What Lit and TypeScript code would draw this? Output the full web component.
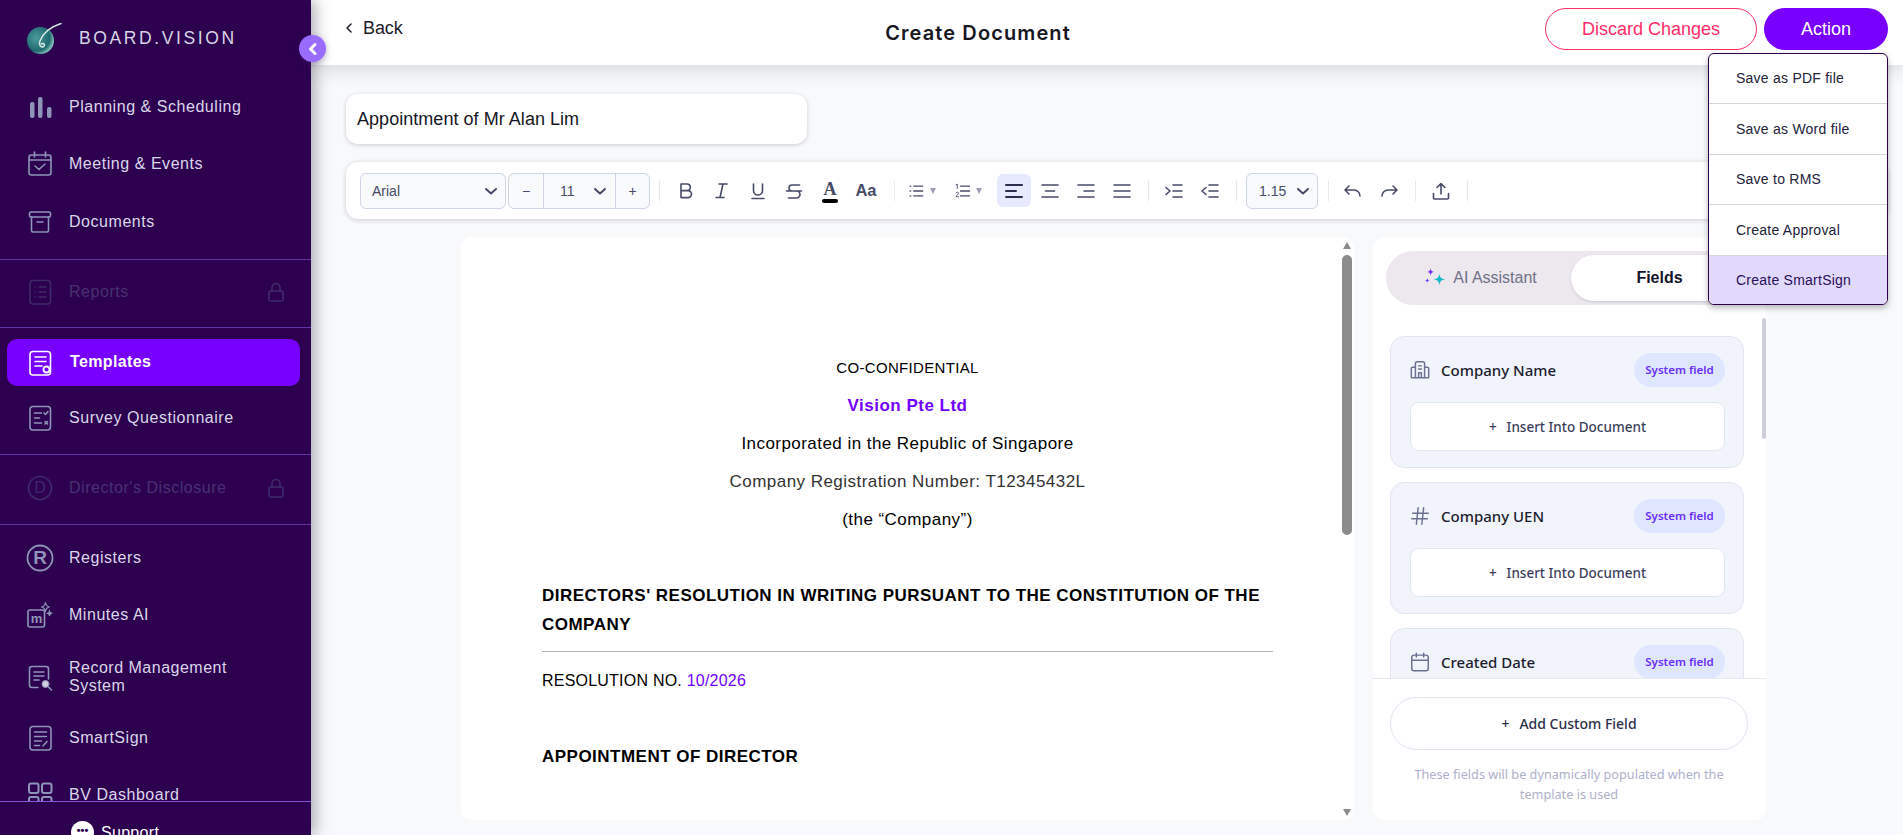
import { LitElement, html, svg, css } from "lit";
import { customElement } from "lit/decorators.js";

const ico = (body: unknown, size = 28, vb = 28) =>
  html`<svg width=${size} height=${size} viewBox="0 0 ${vb} ${vb}" fill="none" stroke="currentColor" stroke-width="1.6" stroke-linecap="round" stroke-linejoin="round">${body}</svg>`;
const I = {
  bars: svg`<rect x="4" y="9" width="4.5" height="16" rx="2" fill="currentColor" stroke="none"/><rect x="12" y="4" width="4.5" height="21" rx="2" fill="currentColor" stroke="none"/><rect x="21" y="14" width="4.5" height="11" rx="2" fill="currentColor" stroke="none"/>`,
  cal: svg`<rect x="3" y="5" width="22" height="20" rx="2.5"/><path d="M3 10h22M8.5 2v5M19.5 2v5M9 16l4 3.5 6-5.5"/>`,
  box: svg`<rect x="3.5" y="4" width="21" height="5" rx="1.5"/><path d="M5.5 9v13.5a1.500 1.500 0 0 0 1.500 1.500h14a1.500 1.500 0 0 0 1.500-1.500V9M11 14h6"/>`,
  list: svg`<rect x="4" y="2.500" width="20.500" height="23.500" rx="3"/><path d="M9 9h.3M13 9h7M9 14h.3M13 14h7M9 19h.3M13 19h7"/>`,
  lock: svg`<rect x="5" y="11" width="14" height="10" rx="2"/><path d="M8 11V7.500a4 4 0 0 1 8 0V11"/>`,
  tpl: svg`<rect x="4" y="2.500" width="20.500" height="23.500" rx="3"/><path d="M9 8h11M9 12.500h11M9 17h7"/><circle cx="20.500" cy="20.500" r="3" fill="#7700ff" stroke-width="1.8"/>`,
  survey: svg`<rect x="4" y="2.500" width="20.500" height="23.500" rx="3"/><path d="M8.500 9h7M8.500 14h5M8.500 19h7M18 9l1.500 1.500 2.500-3M19 17.500l2.500 2.500M21.500 17.500 19 20"/>`,
  dcirc: svg`<circle cx="14" cy="14" r="11.500"/>`,
  rcirc: svg`<circle cx="14" cy="14" r="12.500" stroke-width="1.8"/>`,
  minutes: svg`<rect x="2" y="9" width="16.500" height="17" rx="2"/><path d="M19.500 1.500c.5 3 1.500 4 4 4.500-2.500.5-3.500 1.500-4 4.500-.5-3-1.500-4-4-4.500 2.500-.5 3.500-1.500 4-4.500z" stroke-width="1.200"/><path d="M23.500 9.500c.3 1.800 1 2.400 2.800 2.800-1.800.4-2.500 1-2.800 2.800-.3-1.800-1-2.400-2.800-2.800 1.800-.4 2.500-1 2.800-2.800z" fill="currentColor" stroke-width="1"/>`,
  rms: svg`<path d="M12 24.500H6a2.500 2.500 0 0 1-2.500-2.500V6A2.500 2.500 0 0 1 6 3.500h14A2.500 2.500 0 0 1 22.500 6v10"/><path d="M8 9h10M8 13h10M8 17h5"/><circle cx="19.500" cy="21" r="3.500" fill="#cfcfe0" stroke-width="1"/><path d="M22.500 24l3 3"/>`,
  sign: svg`<rect x="4" y="2.500" width="21" height="23.500" rx="3"/><path d="M8.500 8h12M8.500 12.500h12M8.500 17h7M8.500 21.500h5M17 22l4-4.500"/>`,
  dash: svg`<rect x="3" y="2.500" width="9.500" height="9.500" rx="2" stroke-width="2"/><rect x="16" y="2.500" width="9.500" height="9.500" rx="2" stroke-width="2"/><rect x="3" y="16" width="9.500" height="9.500" rx="2" stroke-width="2"/><rect x="16" y="16" width="9.500" height="9.500" rx="2" stroke-width="2"/>`,
  chev: svg`<path d="M4 7l5 4.500L14 7" stroke-width="2"/>`,
  bold: svg`<path d="M6 4h6a3.300 3.300 0 0 1 0 6.600H6zM6 10.600h7a3.500 3.500 0 0 1 0 7H6z"/>`,
  italic: svg`<path d="M8 4h8M5 17.500h8M12 4 9 17.500" />`,
  under: svg`<path d="M6.500 4v6.500a4.500 4.500 0 0 0 9 0V4M5 18.500h12"/>`,
  strike: svg`<path d="M16.500 5H9a3 3 0 0 0 0 6h4.500a3.500 3.500 0 0 1 0 7H5.500M3.500 11h15"/>`,
  alignL: svg`<path d="M3 5h16M3 11h10M3 17h16" stroke-width="2"/>`,
  alignC: svg`<path d="M3 5h16M6.500 11h9M3 17h16"/>`,
  alignR: svg`<path d="M3 5h16M9 11h10M3 17h16"/>`,
  alignJ: svg`<path d="M3 5h16M3 11h16M3 17h16"/>`,
  bullet: svg`<path d="M7 5h11M7 11h11M7 17h11M2.500 5h.8M2.500 11h.8M2.500 17h.8"/>`,
  number: svg`<path d="M8 5h11M8 11h11M8 17h11"/><path d="M2.500 3.500 4 2.500V8M2.500 13.500c.5-1.500 3-1.500 3 0 0 1.500-3 3-3 4.500h3" stroke-width="1.100"/>`,
  indent: svg`<path d="M10 5h9M10 11h9M10 17h9M3 7.500 7 11l-4 3.500"/>`,
  outdent: svg`<path d="M10 5h9M10 11h9M10 17h9M7 7.500 3 11l4 3.500"/>`,
  undo: svg`<path d="M7 6 3 10l4 4M3 10h9a6 6 0 0 1 6 6"/>`,
  redo: svg`<path d="M15 6l4 4-4 4M19 10h-9a6 6 0 0 0-6 6"/>`,
  upload: svg`<path d="M11 14V4M7 7.500 11 3.500l4 4M3.500 13.500v4.500a1 1 0 0 0 1 1h13a1 1 0 0 0 1-1v-4.500"/>`,
  building: svg`<path d="M7 20V5a2 2 0 0 1 2-2h6a2 2 0 0 1 2 2v15M7 9H4a1.500 1.500 0 0 0-1.500 1.500V20M17 9h3a1.500 1.500 0 0 1 1.500 1.500V20M2.500 20.500h19M10.500 7.500h3M10.500 11h3M10.500 20v-5h3v5"/>`,
  hash: svg`<path d="M4 9h17M3 15h17M10 3 8 21M16 3l-2 18"/>`,
  date: svg`<rect x="3" y="4.500" width="18" height="17" rx="2.500"/><path d="M3 10h18M8 2.500v4M16 2.500v4"/>`,
};

const stars = html`<svg width="22" height="22" viewBox="0 0 20 20"><path d="M6 1c.3 2.500 1 3.200 3.200 3.500C7 4.800 6.300 5.500 6 8c-.3-2.500-1-3.200-3.200-3.500C5 4.200 5.700 3.500 6 1z" fill="#7a2cff"/><path d="M14 6c.5 3.800 1.500 4.800 5.200 5.300-3.700.5-4.700 1.500-5.200 5.300-.5-3.800-1.500-4.800-5.200-5.300 3.700-.5 4.700-1.500 5.200-5.300z" fill="#12b8c8"/><path d="M3 10c.2 1.500.7 2 2.200 2.200-1.500.2-2 .7-2.200 2.200-.2-1.500-.7-2-2.200-2.200 1.500-.2 2-.7 2.200-2.200z" fill="#6a3cf0"/></svg>`;

const logo = html`<svg width="36" height="32" viewBox="0 0 36 32">
  <defs><radialGradient id="lg" cx="35%" cy="40%" r="70%"><stop offset="0" stop-color="#4d9a9c"/><stop offset=".7" stop-color="#1f6a70"/><stop offset="1" stop-color="#9fd8cc"/></radialGradient></defs>
  <circle cx="14.500" cy="17.500" r="13.500" fill="url(#lg)"/>
  <path d="M35 .5C24 4 17 10 14 18c-1.500 4 1 7 3.500 5.500 2-1.300.5-4-2-2.500" fill="none" stroke="#d8e8e4" stroke-width="1.500" stroke-linecap="round"/>
</svg>`;

type Row = { t: string; i: unknown; locked?: boolean; letter?: string };

@customElement("app-root")
export class AppRoot extends LitElement {
  static styles = css`
    :host { display: block; height: 835px; overflow: hidden; font-family: "Liberation Sans", Arial, sans-serif; background: #f8f9fb; }
    * { box-sizing: border-box; }
    .app { display: grid; grid-template-columns: 311px 1fr; height: 835px; }
    /* sidebar */
    .side { position: relative; z-index: 3; background: #2c004f; color: #dbd6ea; display: flex; flex-direction: column; height: 835px; box-shadow: 4px 0 14px rgba(40,40,50,.38); }
    .brand { height: 78px; display: flex; align-items: flex-start; padding: 23px 0 0 26px; flex: none; }
    .brand span { margin: 5px 0 0 17px; font-size: 17.500px; letter-spacing: 2.600px; color: #d9d4e6; line-height: 20px; }
    .toggle { position: absolute; right: -15px; top: 35px; width: 27px; height: 27px; border-radius: 50%; background: #9a6bff; color: #fff; display: flex; align-items: center; justify-content: center; box-shadow: 0 2px 6px rgba(60,40,120,.35); }
    .nav { flex: 1; min-height: 0; overflow: hidden; }
    .sec { border-bottom: 1px solid #5d35a6; }
    .sec.last { border-bottom: 0; }
    .s1 { padding-bottom: 8px; }
    .s2 { padding: 4px 0 6px; }
    .s3 { padding: 11px 0 7px; }
    .s4 { padding: 5px 0 7px; }
    .s5 { padding-top: 4px; }
    .row { height: 57.5px; display: flex; align-items: center; padding-left: 26px; font-size: 16px; letter-spacing: .54px; line-height: 18px; color: #dbd6ea; }
    .row .ic { width: 28px; height: 28px; flex: none; color: #8f93b8; margin-right: 15px; }
    .row .ic svg { display: block; }
    .row.tall { height: 65px; }
    .row.locked { color: #47326f; }
    .row.locked .ic { color: #3f2a68; position: relative; }
    .lk { margin-left: auto; margin-right: 23px; width: 24px; height: 24px; color: #3f2a68; }
    .row .wrap { width: 180px; letter-spacing: .5px; }
    .row.active { height: 47px; margin: 0 11px 3px 7px; padding: 0 0 2px 19px; background: #7700ff; border-radius: 10px; color: #fff; font-weight: 700; letter-spacing: .38px; }
    .row.active .ic { color: #fff; margin-right: 16px; margin-top: 2px; }
    .gl { position: absolute; inset: 0; display: flex; align-items: center; justify-content: center; font-size: 16px; font-weight: 400; letter-spacing: 0; color: inherit; }
    .gl.b { font-weight: 700; font-size: 19px; }
    .gl.m { inset: 9px 9px 2px 2px; font-size: 13px; font-weight: 700; }
    .ic.rel { position: relative; }
    .foot { flex: none; height: 34px; border-top: 1px solid #8453d8; display: flex; align-items: flex-start; padding: 19px 0 0 71px; gap: 7px; color: #fff; font-size: 16px; letter-spacing: .3px; line-height: 24px; }
    .dots { width: 23px; height: 23px; border-radius: 50%; background: #fff; color: #2c004f; flex: none; font-size: 11px; font-weight: 700; letter-spacing: 0; line-height: 18px; text-align: center; }
    /* main */
    .main { min-width: 0; display: flex; flex-direction: column; height: 835px; }
    .top { position: relative; z-index: 2; flex: none; height: 65px; background: #fff; display: flex; align-items: flex-start; box-shadow: 0 4px 18px rgba(60,60,70,.18); padding: 8px 15px 0 34px; }
    .back { display: flex; align-items: center; gap: 10px; width: 481px; height: 40px; font-size: 18px; letter-spacing: -.1px; color: #1b1b2a; flex: none; }
    .title { width: 304px; flex: none; margin: 6px auto 0 0; text-align: center; font-family: Inter, sans-serif; font-weight: 600; font-size: 20px; letter-spacing: 1.1px; line-height: 38px; color: #16161f; white-space: nowrap; }
    .btn { height: 42px; border-radius: 21px; display: flex; align-items: center; justify-content: center; font-size: 18px; flex: none; }
    .discard { width: 212px; border: 1px solid #ff2d68; color: #ff2d68; background: #fff; margin-right: 7px; }
    .action { width: 124px; background: #7700ff; color: #fff; }
    .menu { position: absolute; top: 53px; right: 15px; width: 180px; height: 252px; background: #fff; border: 1px solid #2c004f; border-radius: 6px; overflow: hidden; box-shadow: 0 3px 6px rgba(0,0,0,.28); z-index: 5; display: flex; flex-direction: column; }
    .menu div { height: 50px; flex: none; display: flex; align-items: center; padding: 0 0 2px 27px; font-size: 14px; letter-spacing: .24px; color: #22223a; border-bottom: 1px solid #d4d4dc; }
    .menu div:nth-child(even) { height: 51px; padding-bottom: 0; }
    .menu div:last-child { height: 50px; border-bottom: 0; background: #e0d9fd; color: #2c0f5e; }
    .body { flex: 1; min-height: 0; padding: 29px 15px 15px 35px; display: flex; flex-direction: column; position: relative; }
    .name { width: 461px; height: 50px; background: #fff; border-radius: 12px; box-shadow: 0 1px 4px rgba(30,30,60,.2); padding-left: 11px; font-size: 18px; letter-spacing: .04px; display: flex; align-items: center; color: #16161f; flex: none; }
    .bar { height: 57px; margin-top: 18px; background: #fff; border-radius: 12px; box-shadow: 0 1px 5px rgba(30,30,60,.2); display: flex; align-items: center; padding-left: 14px; flex: none; color: #474b68; }
    .sel { height: 36px; border: 1px solid #cdd5e6; background: #f8fafc; border-radius: 6px; display: flex; align-items: center; font-size: 14px; color: #474b68; padding: 0 5px 0 11px; justify-content: space-between; flex: none; }
    .sel.font { width: 146px; margin-right: 2px; }
    .sel.lh { width: 72px; padding: 0 5px 0 12px; }
    .group { display: flex; width: 142px; height: 36px; border: 1px solid #cdd5e6; border-radius: 6px; background: #f8fafc; font-size: 14px; align-items: center; flex: none; }
    .group span { display: flex; align-items: center; justify-content: center; height: 100%; }
    .g1 { width: 35px; border-right: 1px solid #cdd5e6; }
    .g2 { width: 72px; border-right: 1px solid #cdd5e6; padding: 0 6px 0 16px; justify-content: space-between !important; }
    .g3 { flex: 1; }
    .sep { width: 1px; height: 20px; background: #e6e8ef; flex: none; margin: 0 9px 0 9px; }
    .sep.l { margin: 0 10px 0 9px; }
    .sep.t { margin: 0 8px 0 7px; }
    .sep.p { margin: 0 9px 0 7px; }
    .sep.a { margin: 0 7px 0 10px; }
    .tb { width: 34px; height: 33px; margin-right: 2px; display: flex; align-items: center; justify-content: center; border-radius: 6px; flex: none; }
    .tb.on { background: #e7e9fd; color: #2b2d4c; }
    .tb.wide { width: 43px; margin-right: 3px; gap: 3px; justify-content: flex-start; padding-left: 3px; }
    .caret { width: 0; height: 0; border-left: 3.500px solid transparent; border-right: 3.500px solid transparent; border-top: 6px solid #9a9db3; flex: none; margin-left: 1px; }
    .color { display: flex; flex-direction: column; align-items: center; font-family: "Liberation Serif", serif; font-weight: 700; font-size: 18px; line-height: 17px; color: #474b68; margin-top: 2px; }
    .color i { display: block; width: 16px; height: 4px; border-radius: 2px; background: #000; margin-top: 1px; }
    .aa { font-weight: 700; font-size: 16.500px; color: #474b68; }
    .row2 { flex: 1; min-height: 0; margin: 18px 0 0 115px; display: flex; gap: 19px; height: 583px; }
    .paper { width: 893px; background: #fff; border-radius: 10px; display: flex; overflow: hidden; flex: none; }
    .doc { flex: 1; min-width: 0; padding: 118px 69px 0 81px; color: #000; font-size: 17px; letter-spacing: .45px; }
    .doc p { margin: 0 0 12px; height: 26px; line-height: 26px; text-align: center; }
    .doc .c { font-size: 15px; letter-spacing: .32px; }
    .doc .v { color: #7000ff; font-weight: 700; font-size: 17px; letter-spacing: .5px; }
    .doc .gr { color: #333; letter-spacing: .46px; }
    .doc h3 { margin: 48px 0 0; font-size: 17px; line-height: 29px; letter-spacing: .48px; font-weight: 700; color: #000; }
    .doc hr { margin: 12px 0 0; border: 0; border-top: 1px solid #b4b4b8; }
    .doc .res { margin: 16px 0 0; height: 26px; line-height: 26px; text-align: left; font-size: 16px; letter-spacing: .22px; }
    .doc .res b { font-weight: 400; color: #7000ff; }
    .doc h3.ap { margin-top: 48px; }
    .track { width: 10px; margin-right: 2px; flex: none; display: flex; flex-direction: column; align-items: center; padding: 5px 0 4px; }
    .up { border-left: 4.500px solid transparent; border-right: 4.500px solid transparent; border-bottom: 7px solid #8c8c8c; }
    .dn { border-left: 4.500px solid transparent; border-right: 4.500px solid transparent; border-top: 7px solid #8c8c8c; margin-top: auto; }
    .thumb { width: 10px; height: 280px; margin-top: 6px; background: #8c8c8c; border-radius: 5px; }
    .panel { width: 393px; background: #fff; border-radius: 12px; display: flex; flex-direction: column; overflow: hidden; position: relative; flex: none; }
    .tabs { flex: none; margin: 14px 14px 0 13px; height: 54px; border-radius: 27px; background: #ece8ee; padding: 4px; display: flex; font-size: 16px; }
    .tabs div { display: flex; align-items: center; justify-content: center; gap: 7px; border-radius: 23px; color: #6f7186; width: 181px; flex: none; }
    .tabs .cur { background: #fff; color: #14142a; font-weight: 700; box-shadow: 0 1px 3px rgba(30,30,60,.15); width: 177px; }
    .list { flex: 1; min-height: 0; overflow: hidden; padding: 31px 22px 0 17px; position: relative; border-bottom: 1px solid #e6e8f2; display: flex; flex-direction: column; gap: 14px; }
    .sb { position: absolute; right: 0; top: 13px; width: 4px; height: 121px; background: #cdced8; border-radius: 2px; }
    .card { flex: none; height: 132px; border: 1px solid #e2e6f1; background: #f1f4fa; border-radius: 14px; padding: 16px 18px 0 19px; font-family: "Noto Sans", sans-serif; }
    .chd { display: flex; align-items: center; height: 34px; color: #1c1c30; font-size: 15px; font-weight: 500; }
    .chd svg { color: #6b7190; margin: 0 10px 0 -1px; flex: none; }
    .tag { margin-left: auto; width: 91px; height: 34px; border-radius: 17px; background: #dee7ff; color: #6a2cff; font-size: 11.500px; font-weight: 600; display: flex; align-items: center; justify-content: center; padding-bottom: 1px; }
    .ins { margin-top: 15px; height: 49px; border: 1px solid #e2e6f1; background: #fff; border-radius: 9px; display: flex; align-items: center; justify-content: center; gap: 10px; font-size: 13.500px; color: #3c3f5c; font-weight: 500; }
    .pf { flex: none; height: 141px; padding: 18px 18px 0 17px; font-family: "Noto Sans", sans-serif; text-align: center; }
    .add { height: 53px; width: 358px; border: 1px solid #e2e4f2; border-radius: 27px; display: flex; align-items: center; justify-content: center; gap: 10px; font-size: 14px; font-weight: 500; color: #2c2f4c; padding-bottom: 1px; }
    .note { margin: 14px 0 0; width: 358px; padding: 0 14px; font-size: 12.700px; line-height: 20px; color: #aeb0cc; }
  `;

  private row(r: Row) {
    return html`<div class="row ${r.locked ? "locked" : ""}">
      <div class="ic rel">${ico(r.i)}${r.letter ? html`<span class="gl ${r.letter === "R" ? "b" : ""}">${r.letter}</span>` : ""}</div>
      <span>${r.t}</span>
      ${r.locked ? html`<div class="lk">${ico(I.lock, 24, 24)}</div>` : ""}
    </div>`;
  }

  private tb(i: unknown, cls = "") {
    return html`<div class="tb ${cls}">${ico(i, 22, 22)}</div>`;
  }

  render() {
    const cards = [
      { t: "Company Name", i: I.building },
      { t: "Company UEN", i: I.hash },
      { t: "Created Date", i: I.date },
    ];
    const chev = ico(I.chev, 18, 18);
    return html`<div class="app">
      <aside class="side">
        <div class="brand">${logo}<span>BOARD.VISION</span></div>
        <div class="toggle"><svg width="14" height="14" viewBox="0 0 14 14" fill="none" stroke="currentColor" stroke-width="3" stroke-linecap="round" stroke-linejoin="round"><path d="M9 2.500 4.500 7 9 11.500"/></svg></div>
        <nav class="nav">
          <div class="sec s1">
            ${this.row({ t: "Planning & Scheduling", i: I.bars })}
            ${this.row({ t: "Meeting & Events", i: I.cal })}
            ${this.row({ t: "Documents", i: I.box })}
          </div>
          <div class="sec s2">${this.row({ t: "Reports", i: I.list, locked: true })}</div>
          <div class="sec s3">
            <div class="row active"><div class="ic">${ico(I.tpl)}</div><span>Templates</span></div>
            ${this.row({ t: "Survey Questionnaire", i: I.survey })}
          </div>
          <div class="sec s4">${this.row({ t: "Director's Disclosure", i: I.dcirc, locked: true, letter: "D" })}</div>
          <div class="sec s5 last">
            ${this.row({ t: "Registers", i: I.rcirc, letter: "R" })}
            <div class="row"><div class="ic rel">${ico(I.minutes)}<span class="gl m">m</span></div><span>Minutes AI</span></div>
            <div class="row tall"><div class="ic">${ico(I.rms)}</div><span class="wrap">Record Management System</span></div>
            ${this.row({ t: "SmartSign", i: I.sign })}
            ${this.row({ t: "BV Dashboard", i: I.dash })}
          </div>
        </nav>
        <div class="foot"><div class="dots">•••</div><span>Support</span></div>
      </aside>
      <main class="main">
        <header class="top">
          <div class="back"><svg width="8" height="12" viewBox="0 0 8 12" fill="none" stroke="#1b1b2a" stroke-width="1.500" stroke-linecap="round" stroke-linejoin="round"><path d="M6 2 2 6l4 4"/></svg><span>Back</span></div>
          <div class="title">Create Document</div>
          <div class="btn discard">Discard Changes</div>
          <div class="btn action">Action</div>
          <div class="menu">
            <div>Save as PDF file</div><div>Save as Word file</div><div>Save to RMS</div><div>Create Approval</div><div>Create SmartSign</div>
          </div>
        </header>
        <section class="body">
          <div class="name">Appointment of Mr Alan Lim</div>
          <div class="bar">
            <div class="sel font"><span>Arial</span>${chev}</div>
            <div class="group"><span class="g1">−</span><span class="g2">11 ${chev}</span><span class="g3">+</span></div>
            <div class="sep"></div>
            ${this.tb(I.bold)}${this.tb(I.italic)}${this.tb(I.under)}${this.tb(I.strike)}
            <div class="tb"><div class="color">A<i></i></div></div>
            <div class="tb aa">Aa</div>
            <div class="sep l"></div>
            <div class="tb wide">${ico(I.bullet, 18, 22)}<span class="caret"></span></div>
            <div class="tb wide">${ico(I.number, 18, 22)}<span class="caret"></span></div>
            ${this.tb(I.alignL, "on")}${this.tb(I.alignC)}${this.tb(I.alignR)}${this.tb(I.alignJ)}
            <div class="sep t"></div>
            ${this.tb(I.indent)}${this.tb(I.outdent)}
            <div class="sep p"></div>
            <div class="sel lh"><span>1.15</span>${chev}</div>
            <div class="sep a"></div>
            ${this.tb(I.undo)}${this.tb(I.redo)}
            <div class="sep t"></div>
            ${this.tb(I.upload)}
            <div class="sep t"></div>
          </div>
          <div class="row2">
            <article class="paper">
              <div class="doc">
                <p class="c">CO-CONFIDENTIAL</p>
                <p class="v">Vision Pte Ltd</p>
                <p>Incorporated in the Republic of Singapore</p>
                <p class="gr">Company Registration Number: T12345432L</p>
                <p>(the “Company”)</p>
                <h3>DIRECTORS' RESOLUTION IN WRITING PURSUANT TO THE CONSTITUTION OF THE COMPANY</h3>
                <hr />
                <p class="res">RESOLUTION NO. <b>10/2026</b></p>
                <h3 class="ap">APPOINTMENT OF DIRECTOR</h3>
              </div>
              <div class="track"><div class="up"></div><div class="thumb"></div><div class="dn"></div></div>
            </article>
            <aside class="panel">
              <div class="tabs"><div>${stars}<span>AI Assistant</span></div><div class="cur">Fields</div></div>
              <div class="list">
                <div class="sb"></div>
                ${cards.map((c) => html`<div class="card">
                  <div class="chd">${ico(c.i, 22, 24)}<span>${c.t}</span><span class="tag">System field</span></div>
                  <div class="ins"><span>+</span><span>Insert Into Document</span></div>
                </div>`)}
              </div>
              <div class="pf">
                <div class="add"><span>+</span><span>Add Custom Field</span></div>
                <p class="note">These fields will be dynamically populated when the template is used</p>
              </div>
            </aside>
          </div>
        </section>
      </main>
    </div>`;
  }
}
